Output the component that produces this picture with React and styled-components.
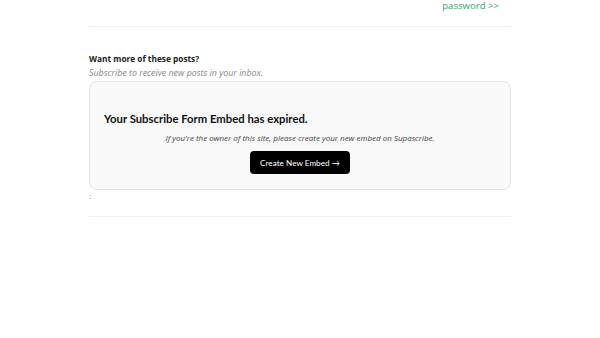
import React from "react";
import styled, { createGlobalStyle } from "styled-components";

const Global = createGlobalStyle`
  html, body { margin: 0; padding: 0; background: #fff; }
  body { font-family: "Open Sans", sans-serif; }
`;

const Column = styled.div`
  width: 422px;
  margin: 0 auto;
  display: flex;
  flex-direction: column;
`;

const TopRow = styled.div`
  display: flex;
  justify-content: flex-end;
  padding-right: 12px;
  height: 26px;
  align-items: flex-start;
`;

const GreenLink = styled.a`
  color: #3aa66b;
  font-family: "Open Sans", sans-serif;
  font-size: 9.6px;
  line-height: 11px;
  text-decoration: none;
`;

const Rule = styled.hr`
  border: 0;
  border-top: 1px solid #efefef;
  margin: 0;
`;

const Section = styled.div`
  padding-top: 25px;
  display: flex;
  flex-direction: column;
`;

const Heading = styled.div`
  font-family: "Open Sans", sans-serif;
  font-weight: 700;
  font-size: 8.3px;
  color: #222;
  line-height: 14px;
`;

const Sub = styled.div`
  font-family: "Open Sans", sans-serif;
  font-style: italic;
  font-size: 8.85px;
  color: #888;
  line-height: 14px;
  margin-bottom: 1px;
`;

const Card = styled.div`
  background: #f9f9f9;
  border: 1px solid #e6e6e6;
  border-radius: 8px;
  height: 109px;
  box-sizing: border-box;
  padding: 29px 14px 0;
  display: flex;
  flex-direction: column;
  align-items: center;
`;

const CardTitle = styled.div`
  align-self: flex-start;
  font-family: Lato, sans-serif;
  font-weight: 700;
  font-size: 11.3px;
  color: #111;
  line-height: 16px;
`;

const CardText = styled.div`
  font-family: "Open Sans", sans-serif;
  font-style: italic;
  font-size: 8px;
  color: #444;
  margin-top: 5px;
  line-height: 12px;
`;

const Button = styled.button`
  margin-top: 7px;
  background: #000;
  color: #fff;
  border: 0;
  border-radius: 4px;
  width: 100px;
  height: 23px;
  font-family: Lato, sans-serif;
  font-size: 8.2px;
  padding: 0;
  cursor: pointer;
`;

const Colon = styled.div`
  font-family: "Open Sans", sans-serif;
  font-size: 8px;
  color: #888;
  line-height: 10px;
  height: 26px;
  padding-top: 1px;
  box-sizing: border-box;
`;

export default function App() {
  return (
    <>
      <Global />
      <Column>
        <TopRow>
          <GreenLink href="#">password &gt;&gt;</GreenLink>
        </TopRow>
        <Rule />
        <Section>
          <Heading>Want more of these posts?</Heading>
          <Sub>Subscribe to receive new posts in your inbox.</Sub>
          <Card>
            <CardTitle>Your Subscribe Form Embed has expired.</CardTitle>
            <CardText>
              If you're the owner of this site, please create your new embed on Supascribe.
            </CardText>
            <Button>Create New Embed →</Button>
          </Card>
          <Colon>:</Colon>
          <Rule />
        </Section>
      </Column>
    </>
  );
}
